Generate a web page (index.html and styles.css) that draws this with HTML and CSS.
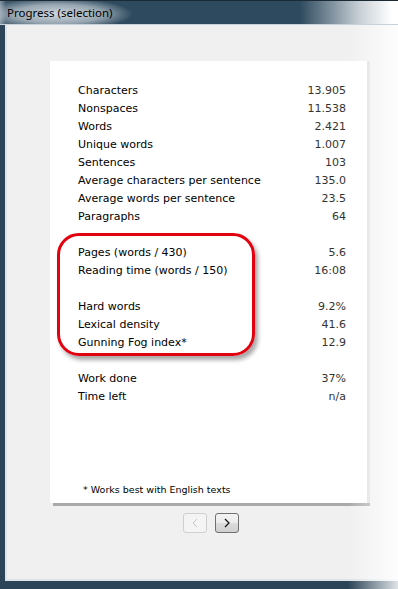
FILE: index.html
```html
<!DOCTYPE html>
<html lang="en">
  <head>
    <meta charset="UTF-8">
    <title>Progress (selection)</title>
    <link rel="stylesheet" href="styles.css">
  </head>
  <body>
    <div id="window">
      <div id="titlebar">
        <span class="title">Progress (selection)</span>
      </div>
      <div id="client">
        <div id="card">
          <div class="row"><span>Characters</span><span class="val">13.905</span></div>
          <div class="row"><span>Nonspaces</span><span class="val">11.538</span></div>
          <div class="row"><span>Words</span><span class="val">2.421</span></div>
          <div class="row"><span>Unique words</span><span class="val">1.007</span></div>
          <div class="row"><span>Sentences</span><span class="val">103</span></div>
          <div class="row"><span>Average characters per sentence</span><span class="val">135.0</span></div>
          <div class="row"><span>Average words per sentence</span><span class="val">23.5</span></div>
          <div class="row"><span>Paragraphs</span><span class="val">64</span></div>
          <div class="row"></div>
          <div class="row"><span>Pages (words / 430)</span><span class="val">5.6</span></div>
          <div class="row"><span>Reading time (words / 150)</span><span class="val">16:08</span></div>
          <div class="row"></div>
          <div class="row"><span>Hard words</span><span class="val">9.2%</span></div>
          <div class="row"><span>Lexical density</span><span class="val">41.6</span></div>
          <div class="row"><span>Gunning Fog index*</span><span class="val">12.9</span></div>
          <div class="row"></div>
          <div class="row"><span>Work done</span><span class="val">37%</span></div>
          <div class="row"><span>Time left</span><span class="val">n/a</span></div>

          <div class="note">* Works best with English texts</div>

          <!-- annotation drawn over the screenshot -->
          <div class="marker"></div>
        </div>

        <div id="nav">
          <div class="nav_btn disabled">
            <svg width="8" height="10" viewBox="0 0 8 10"><polyline points="6,1 2,5 6,9" fill="none" stroke="#c4c4c4" stroke-width="1"/></svg>
          </div>
          <div class="nav_btn">
            <svg width="8" height="10" viewBox="0 0 8 10"><polyline points="2,1 6,5 2,9" fill="none" stroke="#111" stroke-width="1.2"/></svg>
          </div>
        </div>
      </div>
      <div id="fade"></div>
    </div>
  </body>
</html>
```

FILE: styles.css
```css
html, body {
  margin: 0;
  padding: 0;
  background-color: #ffffff;
}
#window {
  position: relative;
  width: 398px;
  height: 589px;
  overflow: hidden;

  display: flex;
  flex-direction: column;

  background-color: #2b4457;
}
#titlebar {
  height: 25px;
  flex-shrink: 0;

  background:
    radial-gradient(ellipse 75px 16px at 58px 13px, rgba(215, 222, 228, 0.95), rgba(215, 222, 228, 0.6) 60%, rgba(215, 222, 228, 0) 100%),
    linear-gradient(to right, #8a9aa6 0px, #3c5669 6px, #2e4a5e 120px, #2e4a5e 300px, #c9d1d7 360px, #ffffff 392px),
    #2e4a5e;
  border-top: 1px solid #1b2a35;
  border-bottom: 1px solid #c9d2da;
  box-sizing: border-box;

  padding-left: 7px;
}
.title {
  font-family: "Noto Sans", "DejaVu Sans", sans-serif;
  font-size: 11.5px;
  line-height: 24px;
  color: #000000;
}
#client {
  flex: 1;
  background-color: #f0f0f0;

  margin-left: 5px;
  margin-bottom: 8px;
  border-left: 2px solid #dfe4e8;
  border-bottom: 2px solid #dfe4e8;

  padding-top: 36px;
  padding-left: 43px;
}
#card {
  position: relative;
  width: 317px;
  height: 442px;
  box-sizing: border-box;

  background-color: #ffffff;
  box-shadow: 3px 0 0 #dedede, 3px 3px 0 #a9a9a9;

  padding: 21px 21px 6px 28px;

  display: flex;
  flex-direction: column;

  font-family: "DejaVu Sans", sans-serif;
  font-size: 11px;
  color: #000000;
}
.row {
  height: 18px;
  line-height: 18px;

  display: flex;
  justify-content: space-between;
}
.val {
  color: #333333;
}
.note {
  margin-top: auto;
  padding-left: 5px;

  font-size: 9.5px;
  line-height: 14px;
}
.marker {
  position: absolute;
  left: 7px;
  top: 172px;
  width: 198px;
  height: 123px;
  box-sizing: border-box;

  border: 3px solid #e3000f;
  border-radius: 22px;
  box-shadow: 3px 4px 4px rgba(0, 0, 0, 0.35);
}
#nav {
  display: flex;
  gap: 8px;

  margin-top: 10px;
  margin-left: 133px;
}
.nav_btn {
  width: 24px;
  height: 20px;
  box-sizing: border-box;

  display: flex;
  align-items: center;
  justify-content: center;

  border: 1px solid #707070;
  border-radius: 3px;
  background: linear-gradient(to bottom, #f3f3f3 0%, #ebebeb 50%, #dcdcdc 51%, #cfcfcf 100%);
}
.nav_btn.disabled {
  border-color: #cfcfcf;
  background: #f4f4f4;
}
#fade {
  position: absolute;
  top: 25px;
  right: 0;
  width: 50px;
  height: 564px;

  background: linear-gradient(to right, rgba(255, 255, 255, 0), rgba(255, 255, 255, 0.85));
}
```
